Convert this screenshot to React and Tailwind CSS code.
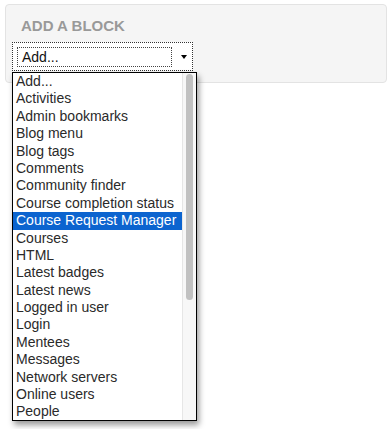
const items = [
  "Add...",
  "Activities",
  "Admin bookmarks",
  "Blog menu",
  "Blog tags",
  "Comments",
  "Community finder",
  "Course completion status",
  "Course Request Manager",
  "Courses",
  "HTML",
  "Latest badges",
  "Latest news",
  "Logged in user",
  "Login",
  "Mentees",
  "Messages",
  "Network servers",
  "Online users",
  "People",
];

export default function App() {
  const selected = "Course Request Manager";

  return (
    <div className="relative h-[429px] w-[391px] overflow-hidden bg-white font-['Liberation_Sans',Arial,sans-serif]">
      <div className="ml-[5px] mt-[4px] h-[79px] w-[382px] rounded-[4px] border border-[#e3e3e3] bg-[#f5f5f5] pt-[12px]">
        <h2 className="ml-[15px] text-[15px] font-bold leading-[18px] text-[#999999]">ADD A BLOCK</h2>
        <div className="ml-[6px] mt-[7px] flex h-[29px] w-[181px] items-start border border-dotted border-[#333] bg-white">
          <div className="ml-[4px] mt-[4px] h-[20px] w-[155px] border border-dotted border-[#444] pl-[4px] text-[14px] leading-[18px] text-[#111]">
            Add...
          </div>
          <div className="ml-[9px] mt-[12px] h-0 w-0 border-l-[3px] border-r-[3px] border-t-[4px] border-l-transparent border-r-transparent border-t-black" />
        </div>
      </div>

      <div className="absolute left-[12px] top-[72px] flex h-[349px] w-[185px] border border-black bg-white shadow-[2px_4px_6px_rgba(0,0,0,0.4)]">
        <ul className="flex-1 overflow-hidden">
          {items.map((item) => (
            <li
              key={item}
              className={
                item === selected
                  ? "h-[17.4px] whitespace-nowrap bg-[#0c64cf] pl-[3px] text-[14px] leading-[17.4px] text-white"
                  : "h-[17.4px] whitespace-nowrap pl-[3px] text-[14px] leading-[17.4px] text-[#2a2a2a]"
              }
            >
              {item}
            </li>
          ))}
        </ul>
        <div className="w-[14px] border-l border-[#e6e6e6] bg-[#f7f7f7] pl-[3px] pt-[1px]">
          <div className="h-[226px] w-[7px] rounded-full bg-[#c1c1c1]" />
        </div>
      </div>
    </div>
  );
}
